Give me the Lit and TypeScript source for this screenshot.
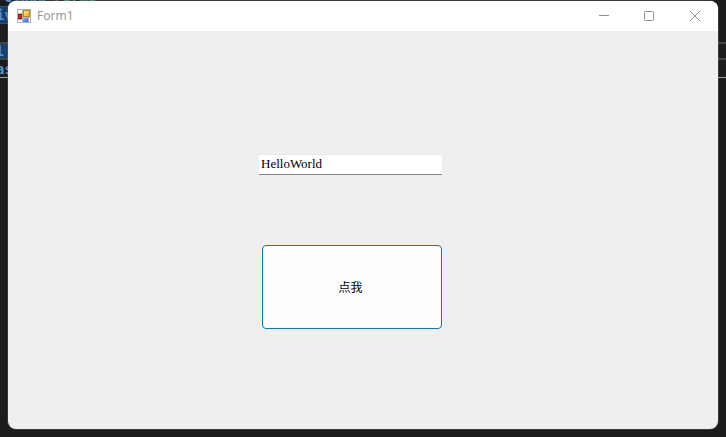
import { LitElement, html, css, svg } from "lit";
import { customElement } from "lit/decorators.js";

@customElement("code-backdrop")
class CodeBackdrop extends LitElement {
  static styles = css`
    :host {
      display: flex;
      flex-direction: column;
      background: #1c1c1c;
      overflow: hidden;
      font: bold 14px/18px "DejaVu Sans Mono", monospace;
      color: #4f94cf;
    }
    .line { flex: none; height: 18px; box-sizing: border-box; text-indent: -4px; }
    .first { flex: none; height: 6px; display: flex; align-items: flex-end; gap: 8px; padding-left: 4px; }
    .type { color: #45a590; }
    .mark { background: #173f70; border: 1px solid #31557f; border-left: 0; line-height: 16px; width: 80px; }
    .gap { flex: none; height: 18px; }
    .current { border: 2px solid #454545; border-width: 2px 0; background: linear-gradient(90deg, #173f70 80px, transparent 80px); line-height: 14px; }
    .rule { border-bottom: 1px solid #a0a0a0; }
  `;
  render() {
    return html`
      <div class="first"><span>class</span><span class="type">Form1</span></div>
      <div class="line mark">iv</div>
      <div class="gap"></div>
      <div class="line current">l</div>
      <div class="line rule">as</div>
    `;
  }
}

@customElement("title-bar")
class TitleBar extends LitElement {
  static styles = css`
    :host {
      display: flex;
      align-items: center;
      height: 30px;
      background: #fff;
      padding-left: 9px;
      font: 12px/16px "Noto Sans", "Open Sans", sans-serif;
      color: #999;
    }
    svg { display: block; }
    .title { flex: 1; margin: 0 6px; font: inherit; }
    button {
      width: 46px;
      height: 30px;
      padding: 0;
      border: 0;
      background: none;
      display: grid;
      place-items: center;
    }
  `;
  private caption(label: string, glyph: unknown) {
    return html`<button aria-label=${label}>
      <svg width="12" height="12" fill="none" stroke="#919191">${glyph}</svg>
    </button>`;
  }
  render() {
    return html`
      <svg width="14" height="14" aria-hidden="true">
        <defs>
          <linearGradient id="y" x2="1" y2="1"><stop stop-color="#ffe88a" /><stop offset="1" stop-color="#f0ac10" /></linearGradient>
          <linearGradient id="r" x2="1" y2="1"><stop stop-color="#e8604a" /><stop offset="1" stop-color="#a80808" /></linearGradient>
          <linearGradient id="b" x2="1" y2="1"><stop stop-color="#8fc0ff" /><stop offset="1" stop-color="#2b62d8" /></linearGradient>
        </defs>
        <rect x=".5" y=".5" width="13" height="13" fill="#fff" stroke="#b4b4b4" />
        <path d="M5.5 0V14M0 4.5H6M0 10.5H6M5 8.5H14M11.5 8V14" stroke="#b4b4b4" />
        <rect x="1.5" y="5.5" width="3" height="4" fill="url(#r)" stroke="#a01818" />
        <rect x="6.5" y="1.5" width="6" height="6" fill="url(#y)" stroke="#b8861c" />
        <rect x="6" y="9" width="5" height="4" fill="url(#b)" />
      </svg>
      <h1 class="title">Form1</h1>
      ${this.caption("Minimize", svg`<path d="M2 5.5H12" />`)}
      ${this.caption("Maximize", svg`<rect x="1.5" y="1.5" width="9" height="9" rx="1" />`)}
      ${this.caption("Close", svg`<path d="M1 1L11 11M11 1L1 11" />`)}
    `;
  }
}

@customElement("app-root")
class AppRoot extends LitElement {
  static styles = css`
    :host {
      display: flex;
      position: relative;
      box-sizing: border-box;
      min-height: 100vh;
      padding: 1px 8px 8px;
      font: 12px/16px "Liberation Sans", "Noto Sans CJK SC", sans-serif;
    }
    code-backdrop { position: absolute; inset: 0; }
    .window {
      position: relative;
      flex: 1;
      display: flex;
      flex-direction: column;
      border-radius: 8px;
      overflow: hidden;
      background: #efefef;
      box-shadow: 0 0 0 1px rgba(110, 110, 110, 0.35);
    }
    form {
      display: flex;
      flex-direction: column;
      align-items: flex-end;
      align-self: flex-start;
      gap: 70px;
      padding: 123px 0 0 251px;
    }
    input {
      box-sizing: border-box;
      width: 183px;
      height: 21px;
      padding: 0 2px 2px;
      border: solid #e8e8e8;
      border-width: 1px 0;
      border-bottom-color: #868686;
      background: #fff;
      color: #000;
      outline: 0;
      font: 13px/16px "Liberation Serif", serif;
    }
    button {
      width: 180px;
      height: 84px;
      padding: 0 3px 0 0;
      border: 1px solid #0078c8;
      border-radius: 4px;
      background: #fdfdfd;
      color: #000;
      font: 12px/16px "Noto Sans CJK SC", sans-serif;
    }
  `;
  render() {
    return html`
      <code-backdrop aria-hidden="true"></code-backdrop>
      <main class="window">
        <title-bar></title-bar>
        <form @submit=${(e: Event) => e.preventDefault()}>
          <input type="text" aria-label="Text" value="HelloWorld" spellcheck="false" />
          <button type="submit">点我</button>
        </form>
      </main>
    `;
  }
}
